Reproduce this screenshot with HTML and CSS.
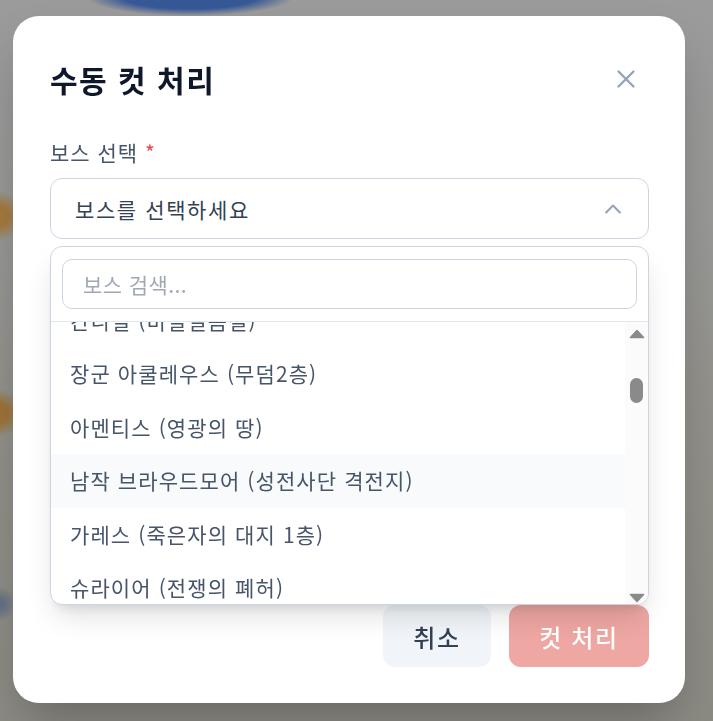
FILE: index.html
```html
<!DOCTYPE html>
<html lang="ko">
<head>
<meta charset="utf-8">
<title>수동 컷 처리</title>
<link rel="stylesheet" href="styles.css">
</head>
<body>
<div class="overlay">
  <div class="modal" role="dialog" aria-labelledby="modal-title">
    <div class="modal-header">
      <h2 id="modal-title" class="modal-title">수동 컷 처리</h2>
      <button class="close-btn" type="button" aria-label="닫기">
        <svg width="30" height="30" viewBox="0 0 24 24" fill="none" stroke="currentColor" stroke-width="1.9" stroke-linecap="round"><path d="M18 6 6 18M6 6l12 12"/></svg>
      </button>
    </div>

    <div class="field">
      <label class="field-label">보스 선택 <span class="required">*</span></label>
      <div class="select-wrap">
        <button class="select" type="button">
          <span class="select-text">보스를 선택하세요</span>
          <svg class="chevron" width="30" height="30" viewBox="0 0 24 24" fill="none" stroke="currentColor" stroke-width="1.6" stroke-linecap="round" stroke-linejoin="round"><path d="m17.5 14.8-5.5-5.6-5.5 5.6"/></svg>
        </button>
        <div class="dropdown">
          <div class="search-box">
            <input class="search" type="text" placeholder="보스 검색...">
          </div>
          <div class="list-area">
            <ul class="list" id="boss-list">
              <li class="item">아드엔타스 (죽은자의 대지 2층)</li>
              <li class="item">탈루스 (시련의 숲)</li>
              <li class="item">코르넬리우스 (무덤1층)</li>
              <li class="item">아하로트 (실라베스 신전)</li>
              <li class="item">미누주크 (공허의 계곡)</li>
              <li class="item">크라우마 (불타는 평원)</li>
              <li class="item">네불라스 (안개 늪지)</li>
              <li class="item">칸디벌 (비밀결봄길)</li>
              <li class="item">장군 아쿨레우스 (무덤2층)</li>
              <li class="item">아멘티스 (영광의 땅)</li>
              <li class="item active">남작 브라우드모어 (성전사단 격전지)</li>
              <li class="item">가레스 (죽은자의 대지 1층)</li>
              <li class="item">슈라이어 (전쟁의 폐허)</li>
              <li class="item">카이샤르 (망각의 동굴)</li>
              <li class="item">리바이어던 (심해 신전)</li>
              <li class="item">엑실리우스 (왕의 무덤)</li>
              <li class="item">칼란시우스 (검은 안개 요새)</li>
              <li class="item">오르칸 (폭풍의 언덕)</li>
              <li class="item">벤타스 (사막 유적지)</li>
              <li class="item">그레이몰 (잿빛 광산)</li>
              <li class="item">쿠룸 (얼음 협곡)</li>
              <li class="item">세렌 (달빛 호수)</li>
              <li class="item">이그니스 (화염 분지)</li>
              <li class="item">바르도스 (해적 만)</li>
              <li class="item">모르가나 (저주받은 성)</li>
              <li class="item">테베론 (고대 도서관)</li>
              <li class="item">자칼 (모래 폭풍 지대)</li>
              <li class="item">헬리오스 (태양의 제단)</li>
              <li class="item">녹스 (밤의 정원)</li>
              <li class="item">아르곤 (철의 요새)</li>
              <li class="item">비르투스 (기사단 훈련장)</li>
              <li class="item">펠릭스 (상인의 항구)</li>
              <li class="item">드라칸 (용의 둥지)</li>
              <li class="item">실바누스 (고목의 숲)</li>
              <li class="item">크로노스 (시간의 탑 1층)</li>
              <li class="item">크로노스 (시간의 탑 2층)</li>
              <li class="item">마그누스 (거인의 무덤)</li>
              <li class="item">오큘루스 (감시자의 눈)</li>
              <li class="item">템페스트 (번개 평원)</li>
              <li class="item">루멘 (빛의 성소)</li>
              <li class="item">베리타스 (진실의 법정)</li>
              <li class="item">카르니스 (피의 투기장)</li>
              <li class="item">울프릭 (늑대 소굴)</li>
              <li class="item">나이트메어 (악몽의 회랑)</li>
              <li class="item">소르가 (마녀의 늪)</li>
              <li class="item">그라우스 (돌의 정원)</li>
              <li class="item">에테르 (하늘 섬)</li>
              <li class="item">프로스트 (서리 봉우리)</li>
              <li class="item">아비스 (심연의 균열)</li>
              <li class="item">하데스 (망자의 강)</li>
            </ul>
            <div class="scrollbar" aria-hidden="true">
              <svg class="sb-arrow" width="16" height="10" viewBox="0 0 16 10"><path d="M8 1.5 14.5 8.5H1.5Z" fill="#8a8a8a" stroke="#8a8a8a" stroke-width="1.6" stroke-linejoin="round"/></svg>
              <span class="sb-thumb" id="sb-thumb"></span>
              <svg class="sb-arrow sb-down" width="16" height="10" viewBox="0 0 16 10"><path d="M8 8.5 14.5 1.5H1.5Z" fill="#8a8a8a" stroke="#8a8a8a" stroke-width="1.6" stroke-linejoin="round"/></svg>
            </div>
          </div>
        </div>
      </div>
    </div>

    <div class="actions">
      <button class="btn btn-cancel" type="button">취소</button>
      <button class="btn btn-primary" type="button" disabled>컷 처리</button>
    </div>
  </div>
</div>
<script src="script.js"></script>
</body>
</html>
```

FILE: styles.css
```css
* { box-sizing: border-box; }

html, body { height: 100%; }

body {
  margin: 0;
  font-family: "Noto Sans CJK KR", "Noto Sans", sans-serif;
  background:
    radial-gradient(ellipse 105px 20px at 190px -4px, rgba(52, 86, 150, 0.97) 65%, rgba(52, 86, 150, 0) 100%),
    radial-gradient(ellipse 30px 26px at -6px 216px, rgba(166, 120, 56, 0.95) 45%, rgba(166, 120, 56, 0) 100%),
    radial-gradient(ellipse 30px 24px at -6px 413px, rgba(158, 114, 52, 0.95) 45%, rgba(158, 114, 52, 0) 100%),
    radial-gradient(ellipse 24px 18px at -6px 604px, rgba(96, 110, 136, 0.9) 35%, rgba(96, 110, 136, 0) 100%),
    linear-gradient(#9b9b9b 0%, #989897 30%, #92918b 55%, #8f8e87 75%, #8b8a83 100%);
  overflow: hidden;
}

.overlay {
  position: fixed;
  inset: 0;
  display: flex;
  align-items: flex-start;
  justify-content: flex-start;
  padding: 16px 0 0 13px;
}

.modal {
  width: 672px;
  background: #ffffff;
  border-radius: 26px;
  padding: 36px 36px 36px 37px;
  box-shadow: 0 25px 50px -12px rgba(0, 0, 0, 0.28);
}

.modal-header {
  display: flex;
  align-items: center;
  justify-content: space-between;
  height: 54px;
  margin-bottom: 31px;
}

.modal-title {
  margin: 0;
  font-size: 30px;
  line-height: 42px;
  font-weight: 700;
  letter-spacing: 1.5px;
  color: #0f172a;
}

.close-btn {
  border: 0;
  background: none;
  padding: 0;
  margin-right: 8px;
  width: 30px;
  height: 30px;
  color: #94a3b8;
  display: flex;
  align-items: center;
  justify-content: center;
}

.field-label {
  display: block;
  font-size: 21px;
  line-height: 30px;
  letter-spacing: 1px;
  color: #475569;
  margin-bottom: 11px;
}

.required { color: #ef4444; }

.select-wrap { position: relative; }

.select {
  width: 100%;
  height: 61px;
  display: flex;
  align-items: center;
  justify-content: space-between;
  padding: 0 20px 0 24px;
  background: #ffffff;
  border: 1px solid #cbd5e1;
  border-radius: 12px;
  font-family: inherit;
  font-size: 21px;
  letter-spacing: 1.6px;
  color: #334155;
  text-align: left;
}

.chevron { color: #94a3b8; }

.dropdown {
  position: absolute;
  left: 0;
  right: 0;
  top: calc(100% + 7px);
  background: #ffffff;
  border: 1px solid #cbd5e1;
  border-radius: 12px;
  box-shadow: 0 15px 30px -6px rgba(0, 0, 0, 0.14), 0 8px 12px -6px rgba(0, 0, 0, 0.1);
  overflow: hidden;
  z-index: 5;
}

.search-box {
  padding: 12px 11px;
  border-bottom: 1px solid #e2e8f0;
}

.search {
  width: 100%;
  height: 50px;
  border: 1px solid #cbd5e1;
  border-radius: 10px;
  padding: 0 20px;
  font-family: inherit;
  font-size: 21px;
  letter-spacing: 0.4px;
  color: #334155;
  outline: none;
}

.search::placeholder { color: #a0a8b4; }

.list-area {
  display: flex;
  height: 282px;
}

.list {
  flex: 1;
  list-style: none;
  margin: 0;
  padding: 0;
  overflow-y: scroll;
  scrollbar-width: none;
}

.list::-webkit-scrollbar { display: none; }

.item {
  padding: 12px 19px;
  font-size: 21px;
  line-height: 29.5px;
  letter-spacing: 1.1px;
  color: #475569;
  white-space: nowrap;
}

.item.active { background: #f8fafc; }

.scrollbar {
  width: 23px;
  flex: none;
  background: #fbfbfb;
  display: flex;
  flex-direction: column;
  align-items: center;
  padding: 7px 0 1px;
}

.sb-arrow { display: block; }

.sb-thumb {
  display: block;
  width: 13px;
  height: 25px;
  border-radius: 7px;
  background: #8a8a8a;
  margin-top: 39px;
}

.sb-down { margin-top: auto; }

.actions {
  display: flex;
  justify-content: flex-end;
  gap: 18px;
  margin-top: 366px;
}

.btn {
  height: 62px;
  border: 0;
  border-radius: 12px;
  font-family: inherit;
  font-size: 24px;
  font-weight: 500;
  letter-spacing: 1.6px;
  padding: 0;
  text-align: center;
}

.btn-cancel {
  width: 108px;
  background: #f1f5f9;
  color: #334155;
}

.btn-primary {
  width: 140px;
  background: #eea7a2;
  color: #ffffff;
}
```

FILE: script.js
```js
var list = document.getElementById('boss-list');
list.scrollTop = 403;
```
